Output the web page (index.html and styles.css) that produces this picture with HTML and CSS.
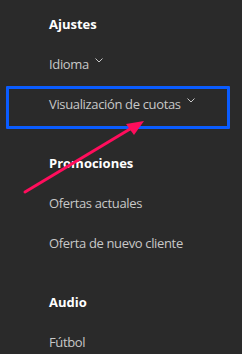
FILE: index.html
```html
<!DOCTYPE html>
<html lang="es">
<head>
<meta charset="utf-8">
<link rel="stylesheet" href="styles.css">
</head>
<body>
<nav class="menu">
  <section class="group">
    <div class="row head">Ajustes</div>
    <div class="row item">Idioma <svg class="chev" viewBox="0 0 8 5" width="8" height="5"><path d="M0.5 0.5 L4 4 L7.5 0.5" fill="none" stroke="#c8c8c8" stroke-width="1"/></svg></div>
    <div class="row item">Visualización de cuotas <svg class="chev" viewBox="0 0 8 5" width="8" height="5"><path d="M0.5 0.5 L4 4 L7.5 0.5" fill="none" stroke="#c8c8c8" stroke-width="1"/></svg></div>
  </section>
  <section class="group">
    <div class="row head">Promociones</div>
    <div class="row item">Ofertas actuales</div>
    <div class="row item">Oferta de nuevo cliente</div>
  </section>
  <section class="group">
    <div class="row head">Audio</div>
    <div class="row item">Fútbol</div>
  </section>
</nav>
<div class="highlight"></div>
<svg class="arrow" width="242" height="354" viewBox="0 0 242 354">
  <line x1="25" y1="192" x2="130" y2="129" stroke="#ff0d5c" stroke-width="3" stroke-linecap="round"/>
  <polygon points="144,121 126,124 134,135" fill="#ff0d5c"/>
</svg>
</body>
</html>
```
FILE: styles.css
```css
html, body {
  margin: 0;
  padding: 0;
  background: #2a2a2a;
  width: 242px;
  height: 354px;
  overflow: hidden;
}
body {
  position: relative;
  font-family: "Open Sans", "Noto Sans", sans-serif;
  font-size: 13px;
}
.menu {
  padding: 4px 0 0 49px;
  display: flex;
  flex-direction: column;
  gap: 19px;
}
.group {
  display: flex;
  flex-direction: column;
}
.row {
  height: 40px;
  display: flex;
  align-items: center;
  white-space: nowrap;
}
.head {
  color: #ffffff;
  font-weight: 700;
}
.item {
  color: #c8c8c8;
  letter-spacing: -0.35px;
}
.chev {
  margin-left: 6px;
  align-self: center;
  position: relative;
  top: -4px;
}
.highlight {
  position: absolute;
  left: 6px;
  top: 86px;
  width: 218px;
  height: 37px;
  border: 3px solid #0a5cff;
  border-radius: 1px;
}
.arrow {
  position: absolute;
  left: 0;
  top: 0;
}
```
